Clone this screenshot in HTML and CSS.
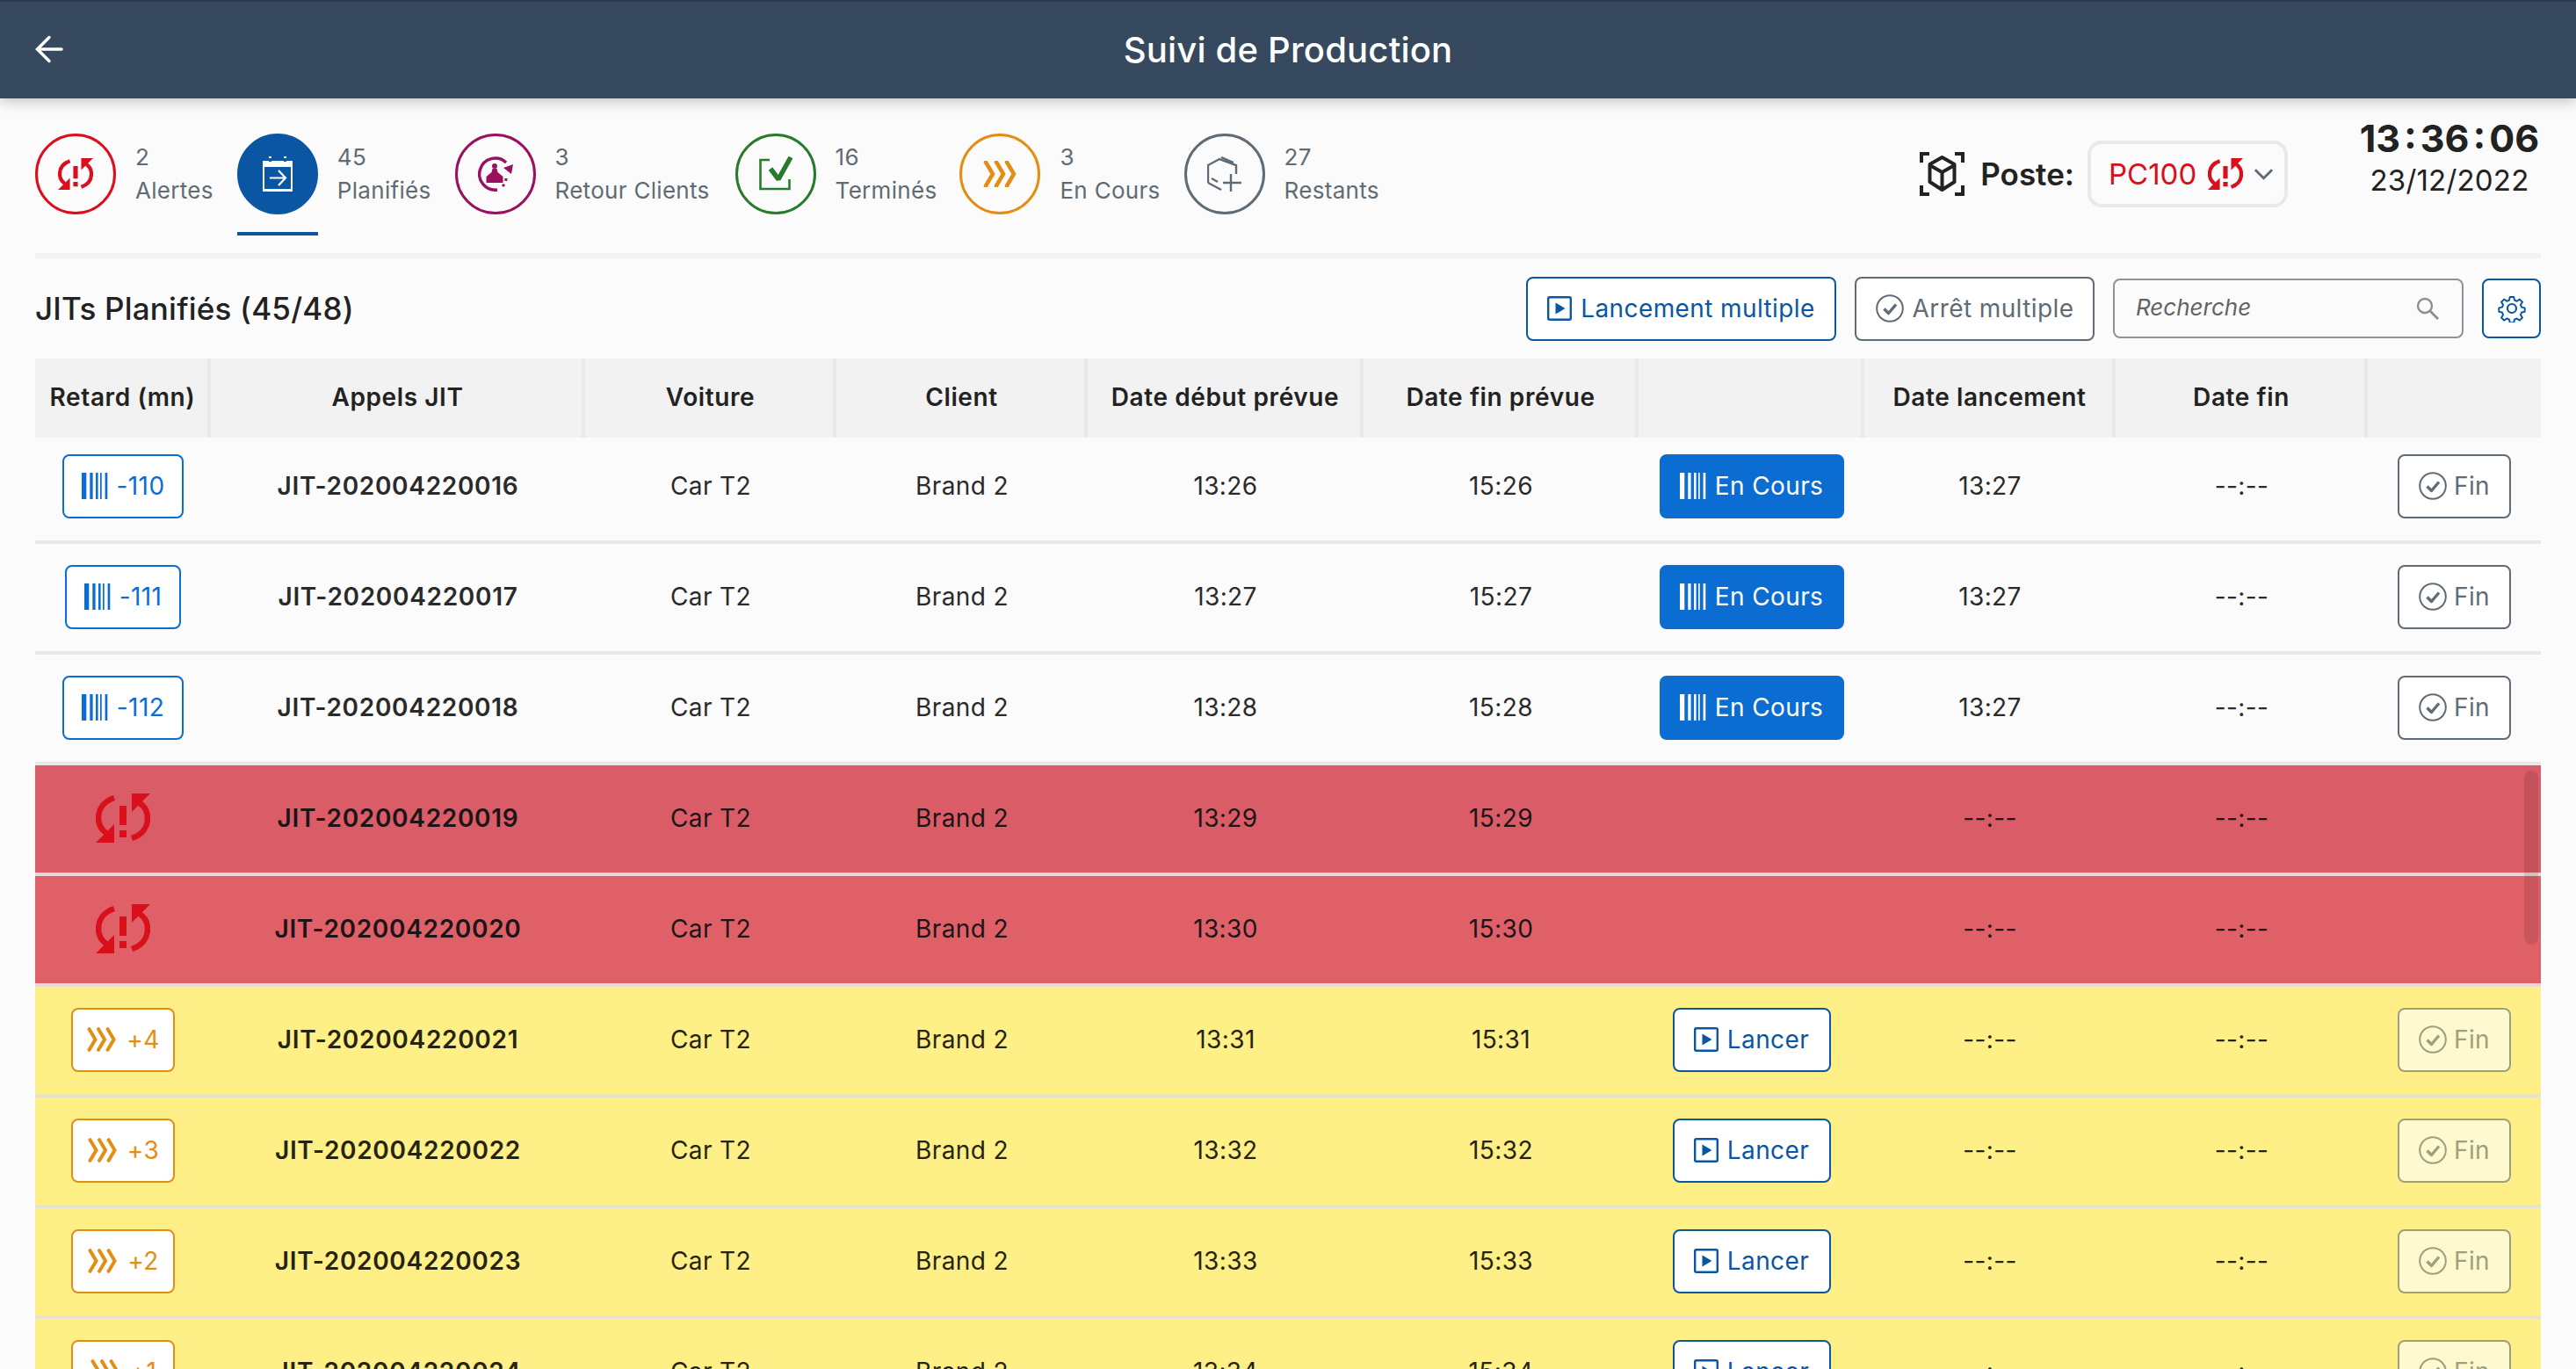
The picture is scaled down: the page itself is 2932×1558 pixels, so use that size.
FILE: index.html

```html
<!DOCTYPE HTML>
<html>
<head>
<meta charset="utf-8">
<title>Suivi de Production</title>
<link rel="stylesheet" href="styles.css">
</head>

<body>
<svg class="sprite">
	<symbol id="i-alert" viewBox="0 0 62 56">
		<path d="M21 5C9 9 3 18 3 28c0 7 3 13 9 17" fill="none" stroke="currentColor" stroke-width="6.5"/>
		<path d="M0 56h21V35z" fill="currentColor"/>
		<path d="M41 51c12-4 18-13 18-23 0-7-3-13-9-17" fill="none" stroke="currentColor" stroke-width="6.5"/>
		<path d="M62 0H41v21z" fill="currentColor"/>
		<path d="M27 14h8v22h-8zM27 42h8v8h-8z" fill="currentColor"/>
	</symbol>
	<symbol id="i-chevrons" viewBox="0 0 41 30">
		<path d="M2 1.500l8 13.500-8 13.500M14 1.500l8 13.500-8 13.500M26 1.500l8 13.500-8 13.500" transform="translate(2 0)" fill="none" stroke="currentColor" stroke-width="4.500" stroke-linecap="round"/>
	</symbol>
	<symbol id="i-barcode" viewBox="0 0 30 30">
		<path d="M0 0h5.300v30H0zM9.300 0h3.300v30H9.300zM16 0h2.600v30H16zM21 0h1.700v30H21zM26.600 0h2.700v30h-2.700z" fill="currentColor"/>
	</symbol>
	<symbol id="i-play" viewBox="0 0 28 28">
		<rect x="1.200" y="1.200" width="25.600" height="25.600" rx="1.500" fill="none" stroke="currentColor" stroke-width="2.400"/>
		<path d="M9.500 7.500l11 6.500-11 6.500z" fill="currentColor"/>
	</symbol>
	<symbol id="i-check" viewBox="0 0 32 32">
		<circle cx="16" cy="16" r="14.800" fill="none" stroke="currentColor" stroke-width="2"/>
		<path d="M9.500 16.500l5 5 8.500-10" fill="none" stroke="currentColor" stroke-width="3.400" stroke-linejoin="round"/>
	</symbol>
</svg>

<header class="topbar">
	<svg class="back" viewBox="0 0 32 32"><path d="M30 16H3M16 2.500L2.500 16 16 29.500" fill="none" stroke="#fff" stroke-width="3.500" stroke-linecap="round"/></svg>
	<h1>Suivi de Production</h1>
</header>

<main class="page">
	<section class="status">
		<ul class="tabs">
			<li class="tab alert">
				<span class="disc"><svg class="disc-alert"><use href="#i-alert"/></svg></span>
				<span class="count">2<br>Alertes</span>
			</li>
			<li class="tab planned">
				<span class="disc">
					<svg class="disc-icon" viewBox="0 0 34 40">
						<path d="M0 5h34v35H0z" fill="#fff"/>
						<path d="M7 0h3v7H7zM24 0h3v7h-3z" fill="#fff"/>
						<path d="M7 2h3v4H7zM24 2h3v4h-3z" fill="#0a56a3"/>
						<path d="M2 12h30v25H2z" fill="#0a56a3"/>
						<path d="M8 24.500h17M18 16l8 8.500-8 8.500" fill="none" stroke="#fff" stroke-width="2.200"/>
					</svg>
				</span>
				<span class="count">45<br>Planifiés</span>
			</li>
			<li class="tab back-client">
				<span class="disc">
					<svg class="disc-icon wide" viewBox="0 0 40 40">
						<path d="M32 7A18 18 0 1 0 22 38" fill="none" stroke="currentColor" stroke-width="3.400"/>
						<path d="M40 9l-2 11-9-7z" fill="currentColor"/>
						<path d="M32 25a14 14 0 0 1-5 10" fill="none" stroke="currentColor" stroke-width="3" stroke-dasharray="3 4"/>
						<circle cx="19" cy="11" r="3" fill="currentColor"/>
						<path d="M16.500 14h5l1 4 6 5v7H9.500v-7l6-5z" fill="currentColor"/>
					</svg>
				</span>
				<span class="count">3<br>Retour Clients</span>
			</li>
			<li class="tab done">
				<span class="disc">
					<svg class="disc-icon wide" viewBox="0 0 38 40">
						<path d="M12 4H1.500v33h33V26" fill="none" stroke="currentColor" stroke-width="2.600"/>
						<path d="M13 14l9 12L36 1" fill="none" stroke="currentColor" stroke-width="5.500" stroke-linejoin="bevel"/>
					</svg>
				</span>
				<span class="count">16<br>Terminés</span>
			</li>
			<li class="tab running">
				<span class="disc"><svg class="disc-chevrons"><use href="#i-chevrons"/></svg></span>
				<span class="count">3<br>En Cours</span>
			</li>
			<li class="tab left">
				<span class="disc">
					<svg class="disc-icon wide" viewBox="0 0 40 40">
						<path d="M1 30V10l13-7 19 7v10M1 30l15 8M16 1l14 6M5 25l7 4" fill="none" stroke="currentColor" stroke-width="2.400"/>
						<path d="M27 20v20M18 30h21" fill="none" stroke="currentColor" stroke-width="2.400"/>
					</svg>
				</span>
				<span class="count">27<br>Restants</span>
			</li>
		</ul>

		<div class="poste">
			<svg class="poste-icon" viewBox="0 0 51 50">
				<path d="M2 12V2h9M40 2h9v10M2 38v10h9M40 48h9V38" fill="none" stroke="#222" stroke-width="4"/>
				<path d="M25.500 6l14 8v20l-14 9-14-9V14zM11.500 15l14 8 14-8M25.500 23v20" fill="none" stroke="#222" stroke-width="4" stroke-linejoin="round"/>
			</svg>
			<span class="poste-label">Poste:</span>
			<div class="poste-select">
				<span>PC100</span>
				<svg class="select-alert"><use href="#i-alert"/></svg>
				<svg class="select-arrow" viewBox="0 0 24 14"><path d="M2 2l10 10L22 2" fill="none" stroke="#5f6b75" stroke-width="3"/></svg>
			</div>
		</div>

		<div class="clock">
			<b>13 : 36 : 06</b>
			<span>23/12/2022</span>
		</div>
	</section>

	<section class="tools">
		<h2>JITs Planifiés (45/48)</h2>
		<button class="btn btn-blue btn-multi"><svg class="ico"><use href="#i-play"/></svg>Lancement multiple</button>
		<button class="btn btn-grey btn-stop"><svg class="ico ico-check"><use href="#i-check"/></svg>Arrêt multiple</button>
		<div class="search">
			<span>Recherche</span>
			<svg viewBox="0 0 26 26"><circle cx="10" cy="10" r="8" fill="none" stroke="#8a9096" stroke-width="2.400"/><path d="M16 16l9 9" stroke="#8a9096" stroke-width="3"/></svg>
		</div>
		<button class="gear">
			<svg viewBox="0 0 32 32">
				<path d="M13.500 1.500h5l.8 4 3 1.300 3.500-2.300 3.500 3.500-2.300 3.500 1.300 3 4 .8v5l-4 .8-1.300 3 2.300 3.500-3.500 3.500-3.500-2.300-3 1.300-.8 4h-5l-.8-4-3-1.300-3.500 2.300-3.500-3.500 2.300-3.500-1.300-3-4-.8v-5l4-.8 1.300-3-2.300-3.500 3.500-3.500 3.500 2.300 3-1.300z" transform="translate(1.600 1.600) scale(.9)" fill="none" stroke="#0a56a3" stroke-width="2.200" stroke-linejoin="round"/>
				<circle cx="16" cy="16" r="5" fill="none" stroke="#0a56a3" stroke-width="2.200"/>
			</svg>
		</button>
	</section>

	<section class="grid">
		<div class="head">
			<div>Retard (mn)</div>
			<div>Appels JIT</div>
			<div>Voiture</div>
			<div>Client</div>
			<div>Date début prévue</div>
			<div>Date fin prévue</div>
			<div></div>
			<div>Date lancement</div>
			<div>Date fin</div>
			<div></div>
		</div>

		<div class="row">
			<div><button class="btn btn-late"><svg class="bars"><use href="#i-barcode"/></svg>-110</button></div>
			<div class="jit">JIT-202004220016</div>
			<div>Car T2</div>
			<div>Brand 2</div>
			<div>13:26</div>
			<div>15:26</div>
			<div><button class="btn btn-run"><svg class="bars"><use href="#i-barcode"/></svg>En Cours</button></div>
			<div>13:27</div>
			<div>--:--</div>
			<div><button class="btn btn-grey btn-fin"><svg class="ico ico-check"><use href="#i-check"/></svg>Fin</button></div>
		</div>
		<div class="row">
			<div><button class="btn btn-late"><svg class="bars"><use href="#i-barcode"/></svg>-111</button></div>
			<div class="jit">JIT-202004220017</div>
			<div>Car T2</div>
			<div>Brand 2</div>
			<div>13:27</div>
			<div>15:27</div>
			<div><button class="btn btn-run"><svg class="bars"><use href="#i-barcode"/></svg>En Cours</button></div>
			<div>13:27</div>
			<div>--:--</div>
			<div><button class="btn btn-grey btn-fin"><svg class="ico ico-check"><use href="#i-check"/></svg>Fin</button></div>
		</div>
		<div class="row">
			<div><button class="btn btn-late"><svg class="bars"><use href="#i-barcode"/></svg>-112</button></div>
			<div class="jit">JIT-202004220018</div>
			<div>Car T2</div>
			<div>Brand 2</div>
			<div>13:28</div>
			<div>15:28</div>
			<div><button class="btn btn-run"><svg class="bars"><use href="#i-barcode"/></svg>En Cours</button></div>
			<div>13:27</div>
			<div>--:--</div>
			<div><button class="btn btn-grey btn-fin"><svg class="ico ico-check"><use href="#i-check"/></svg>Fin</button></div>
		</div>

		<div class="row red red-dark">
			<div><svg class="row-alert"><use href="#i-alert"/></svg></div>
			<div class="jit">JIT-202004220019</div>
			<div>Car T2</div>
			<div>Brand 2</div>
			<div>13:29</div>
			<div>15:29</div>
			<div></div>
			<div>--:--</div>
			<div>--:--</div>
			<div></div>
		</div>
		<div class="row red">
			<div><svg class="row-alert"><use href="#i-alert"/></svg></div>
			<div class="jit">JIT-202004220020</div>
			<div>Car T2</div>
			<div>Brand 2</div>
			<div>13:30</div>
			<div>15:30</div>
			<div></div>
			<div>--:--</div>
			<div>--:--</div>
			<div></div>
		</div>

		<div class="row yellow">
			<div><button class="btn btn-soon"><svg class="chev"><use href="#i-chevrons"/></svg>+4</button></div>
			<div class="jit">JIT-202004220021</div>
			<div>Car T2</div>
			<div>Brand 2</div>
			<div>13:31</div>
			<div>15:31</div>
			<div><button class="btn btn-blue btn-start"><svg class="ico"><use href="#i-play"/></svg>Lancer</button></div>
			<div>--:--</div>
			<div>--:--</div>
			<div><button class="btn btn-grey btn-fin off"><svg class="ico ico-check"><use href="#i-check"/></svg>Fin</button></div>
		</div>
		<div class="row yellow">
			<div><button class="btn btn-soon"><svg class="chev"><use href="#i-chevrons"/></svg>+3</button></div>
			<div class="jit">JIT-202004220022</div>
			<div>Car T2</div>
			<div>Brand 2</div>
			<div>13:32</div>
			<div>15:32</div>
			<div><button class="btn btn-blue btn-start"><svg class="ico"><use href="#i-play"/></svg>Lancer</button></div>
			<div>--:--</div>
			<div>--:--</div>
			<div><button class="btn btn-grey btn-fin off"><svg class="ico ico-check"><use href="#i-check"/></svg>Fin</button></div>
		</div>
		<div class="row yellow">
			<div><button class="btn btn-soon"><svg class="chev"><use href="#i-chevrons"/></svg>+2</button></div>
			<div class="jit">JIT-202004220023</div>
			<div>Car T2</div>
			<div>Brand 2</div>
			<div>13:33</div>
			<div>15:33</div>
			<div><button class="btn btn-blue btn-start"><svg class="ico"><use href="#i-play"/></svg>Lancer</button></div>
			<div>--:--</div>
			<div>--:--</div>
			<div><button class="btn btn-grey btn-fin off"><svg class="ico ico-check"><use href="#i-check"/></svg>Fin</button></div>
		</div>
		<div class="row yellow">
			<div><button class="btn btn-soon"><svg class="chev"><use href="#i-chevrons"/></svg>+1</button></div>
			<div class="jit">JIT-202004220024</div>
			<div>Car T2</div>
			<div>Brand 2</div>
			<div>13:34</div>
			<div>15:34</div>
			<div><button class="btn btn-blue btn-start"><svg class="ico"><use href="#i-play"/></svg>Lancer</button></div>
			<div>--:--</div>
			<div>--:--</div>
			<div><button class="btn btn-grey btn-fin off"><svg class="ico ico-check"><use href="#i-check"/></svg>Fin</button></div>
		</div>

		<div class="scrollbar"></div>
	</section>
</main>
</body>
</html>
```

FILE: styles.css

```css
* {margin:0; padding:0; box-sizing:border-box;}
html, body {height:100%; overflow:hidden;}
body {background:#fbfbfb; color:#222; font-family:Inter, "Liberation Sans", sans-serif;}
li {list-style:none;}
.sprite {display:none;}

/* top bar */
.topbar {height:112px; padding-bottom:2px; background:#37495e; border-top:2px solid #2c3a4b; box-shadow:0 4px 14px rgba(0,0,0,.22); display:flex; align-items:center; justify-content:center; position:relative;}
.topbar h1 {color:#fff; font-size:40px; font-weight:500; letter-spacing:.2px;}
.back {position:absolute; left:40px; top:38px; width:32px; height:32px;}

.page {padding:0 40px;}

/* counters */
.status {height:182px; border-bottom:6px solid #f2f2f2; display:flex; position:relative;}
.tabs {display:flex; gap:27px; padding-top:40px;}
.tab {display:flex; gap:22px; height:116px; color:#5f6b75;}
.disc {width:92px; height:92px; border-radius:50%; border:3px solid currentColor; display:flex; align-items:center; justify-content:center; flex:none;}
.disc-icon {width:34px; height:40px;}
.disc-icon.wide {width:40px;}
.disc-alert {width:40px; height:36px;}
.disc-chevrons {width:41px; height:30px;}
.count {font-size:26px; line-height:38px; color:#5f6b75; padding-top:8px; letter-spacing:.3px;}
.alert .disc {color:#d90f1c;}
.planned .disc {background:#0a56a3; border-color:#0a56a3;}
.planned {position:relative;}
.planned:after {content:""; position:absolute; left:0; bottom:0; width:92px; height:4px; background:#0a56a3;}
.back-client .disc {color:#99105f;}
.done {margin-left:2px;}
.done .disc {color:#2a7a2c;}
.running {margin-left:-1px;}
.running .disc {color:#e38d13;}
.left .disc {color:#5f6b75;}

.poste {display:flex; align-items:center; margin-left:auto; margin-right:80px; height:76px; margin-top:48px; gap:18px;}
.poste-icon {width:51px; height:50px;}
.poste-label {font-size:35px; font-weight:600; margin-right:-3px;}
.poste-select {width:228px; height:76px; border:4px solid #e9e9e9; border-radius:16px; display:flex; align-items:center; padding-left:20px; color:#d90f1c; font-size:33px;}
.select-alert {width:40px; height:38px; margin-left:13px;}
.select-arrow {width:23px; height:14px; margin-left:12px;}

.clock {width:208px; padding-top:20px; text-align:center; white-space:nowrap;}
.clock b {display:block; font-size:43px; font-weight:700; line-height:50px; word-spacing:-6px;}
.clock span {display:block; margin-top:1px; font-size:33px; line-height:44px; letter-spacing:.2px;}

/* tool bar */
.tools {height:114px; display:flex; align-items:center;}
.tools h2 {font-size:35px; font-weight:500; letter-spacing:.2px; margin-right:auto;}
.btn {display:inline-flex; align-items:center; justify-content:center; height:73px; padding:0 20px; gap:10px; font:inherit; font-size:28px; letter-spacing:.4px; background:#fff; border:2.500px solid #0a56a3; border-radius:8px;}
.ico {width:28px; height:28px; flex:none;}
.ico-check {width:32px; height:32px;}
.btn-blue {color:#0a56a3;}
.btn-grey {color:#5f6b75; border-color:#5f6b75;}
.btn-multi {width:353px; padding:0;}
.btn-stop {width:273px; padding:0; margin-left:21px;}
.search {width:399px; height:68px; margin-left:21px; border:2.500px solid #8c949b; border-radius:8px; background:#fbfbfb; display:flex; align-items:center; justify-content:space-between; padding:0 26px 4px 24px; color:#5f6467; font-size:26px; font-style:italic;}
.search svg {width:26px; height:26px; margin-top:4px;}
.gear {width:67px; height:68px; margin-left:21px; background:#fff; border:2.500px solid #0a56a3; border-radius:8px; display:flex; align-items:center; justify-content:center;}
.gear svg {width:32px; height:32px;}

/* table */
.grid {position:relative; --cols:200px 426px 286px 286px 314px 313px 257px 286px 287px 197px;}
.head {display:grid; grid-template-columns:var(--cols); height:90px; background:#f2f2f2; font-size:28px; font-weight:600; letter-spacing:.6px; color:#222;}
.head div {display:flex; align-items:center; justify-content:center; padding-bottom:2px; padding-left:3px; border-right:4px solid #e9e9e9;}
.head div:last-child {border-right:0;}
.row {display:grid; grid-template-columns:var(--cols); height:126px; padding-bottom:2px; border-bottom:4px solid #e9e9e9; font-size:28px; letter-spacing:.4px; color:#2a2a2a;}
.head + .row {height:121px; padding-bottom:7px;}
.row > div {display:flex; align-items:center; justify-content:center;}
.row .jit {font-weight:600; letter-spacing:.7px;}
.red {background:#e06068; border-color:#e8d8d8; color:#1c1418;}
.red-dark {background:#d95c66;}
.yellow {background:#fef087; border-color:#e6e3d0; color:#26240f;}

.btn-late {color:#0b6dd1; border-color:#0b6dd1;}
.btn-run {background:#0b6dd1; border-color:#0b6dd1; color:#fff; width:210px;}
.btn-soon {color:#e38d13; border-color:#e38d13; width:118px; padding:0;}
.btn-start {width:180px; padding:0;}
.btn-fin {width:129px; padding:0; gap:8px;}
.btn-fin.off {opacity:.6;}
.bars {width:30px; height:30px; flex:none;}
.chev {width:36px; height:28px; flex:none;}
.row-alert {width:62px; height:56px; color:#d90f1c;}

.scrollbar {position:absolute; right:3px; top:469px; width:16px; height:198px; border-radius:8px; background:rgba(0,0,0,.1);}
```
